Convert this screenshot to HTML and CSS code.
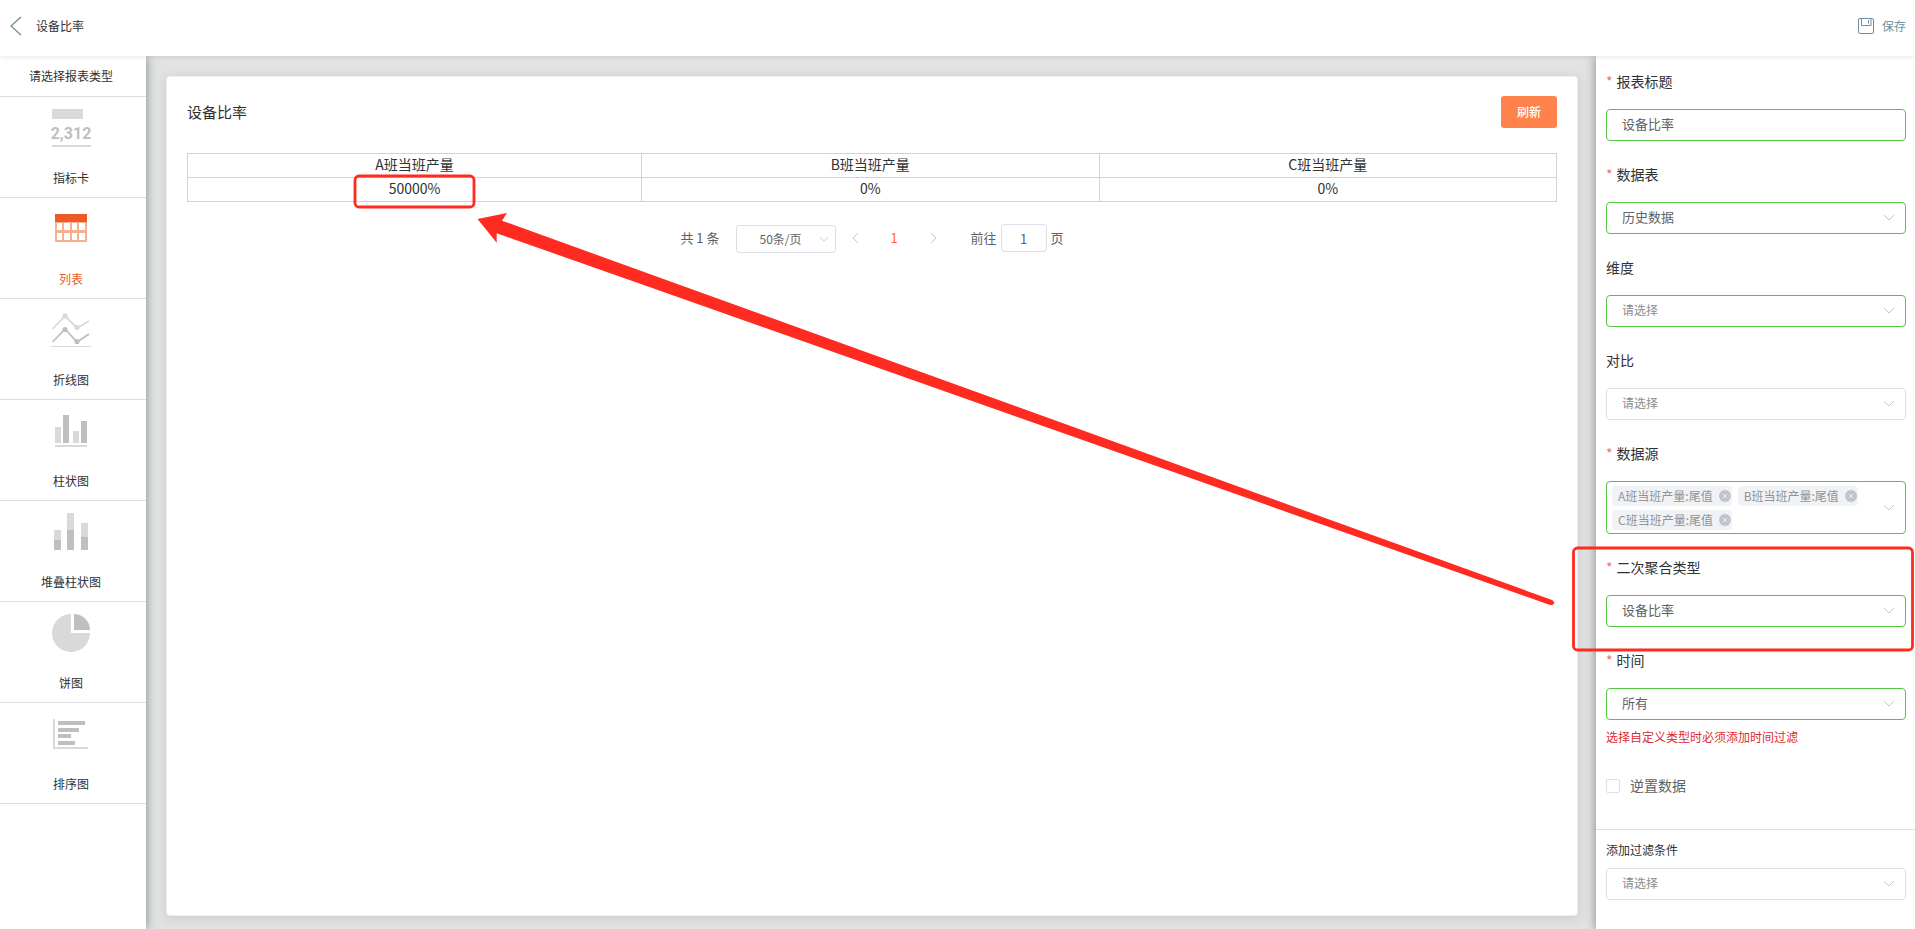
FILE: index.html
```html
<!DOCTYPE html>
<html lang="zh-CN">
<head>
<meta charset="utf-8">
<title>设备比率</title>
<link rel="stylesheet" href="styles.css">
</head>
<body>
<svg class="defs" aria-hidden="true">
  <symbol id="chev" viewBox="0 0 12 8"><path d="M1 1l5 5 5-5" fill="none" stroke="currentColor"/></symbol>
  <symbol id="close" viewBox="0 0 12 12"><circle cx="6" cy="6" r="6" fill="#c0c4cc"/><path d="M4 4l4 4M8 4l-4 4" stroke="#fff" stroke-width=".8" fill="none"/></symbol>
</svg>
<header class="topbar">
  <button class="back" type="button" aria-label="返回"><svg width="12" height="20" viewBox="0 0 12 20"><path d="M11 1L1 10l10 9" fill="none" stroke="#7b95a2" stroke-width="1.5"/></svg></button>
  <h1 class="page-title">设备比率</h1>
  <button class="save" type="button">
    <svg width="16" height="16" viewBox="0 0 16 16" fill="none" stroke="#6e8f9e"><rect x=".5" y=".5" width="15" height="15" rx="1.5"/><path d="M3.500.500v7h9.500v-7M10.500 2v3.500"/></svg>
    <span>保存</span>
  </button>
</header>
<div class="workspace">
  <nav class="types">
    <h2 class="types-title">请选择报表类型</h2>
    <button class="type" type="button">
      <svg width="42" height="42" viewBox="0 0 42 42"><path fill="#d9d9d9" d="M2 2h31v10H2zM2 38h39v2H2z"/><text x="21" y="32" text-anchor="middle" class="metric">2,312</text></svg>
      <span>指标卡</span>
    </button>
    <button class="type active" type="button">
      <svg width="42" height="42" viewBox="0 0 42 42"><path fill="#f6b08f" fill-rule="evenodd" d="M5 14h32v20H5zM7 15h5v7H7zM14 15h6v7h-6zM22 15h5v7h-5zM29 15h6v7h-6zM7 25h5v7H7zM14 25h6v7h-6zM22 25h5v7h-5zM29 25h6v7h-6z"/><path fill="#ed5a26" d="M5 6h32v8H5z"/></svg>
      <span>列表</span>
    </button>
    <button class="type" type="button">
      <svg width="42" height="42" viewBox="0 0 42 42" fill="none" stroke-width="1.8"><path d="M2.500 20L15 7l12 12 12-7" stroke="#d9d9d9"/><path d="M2.500 33L15 20l12 13 12-8" stroke="#bfbfbf"/><path d="M1 37.500h40" stroke="#d9d9d9" stroke-width="1"/><g stroke="none"><circle cx="15" cy="7" r="2.600" fill="#d9d9d9"/><circle cx="27" cy="18.500" r="2.600" fill="#d9d9d9"/><circle cx="15" cy="20.500" r="2.600" fill="#bfbfbf"/><circle cx="27" cy="32.500" r="2.600" fill="#bfbfbf"/></g></svg>
      <span>折线图</span>
    </button>
    <button class="type" type="button">
      <svg width="42" height="42" viewBox="0 0 42 42"><path fill="#d9d9d9" d="M5 17h6v16H5zM23 21h6v12h-6zM5 35h32v2H5z"/><path fill="#bfbfbf" d="M13 5h6v28h-6zM31 11h6v22h-6z"/></svg>
      <span>柱状图</span>
    </button>
    <button class="type" type="button">
      <svg width="42" height="42" viewBox="0 0 42 42"><path fill="#d9d9d9" d="M4 19h7v10H4zM17 2h7v17h-7zM31 12h7v14h-7z"/><path fill="#bfbfbf" d="M4 29h7v10H4zM17 19h7v20h-7zM31 26h7v13h-7z"/></svg>
      <span>堆叠柱状图</span>
    </button>
    <button class="type" type="button">
      <svg width="42" height="42" viewBox="0 0 42 42"><path fill="#d9d9d9" d="M21 2v19h19a19 19 0 1 1-19-19z"/><path fill="#bfbfbf" d="M24 2a16 16 0 0 1 16 16H24z"/></svg>
      <span>饼图</span>
    </button>
    <button class="type" type="button">
      <svg width="42" height="42" viewBox="0 0 42 42"><path fill="#d9d9d9" d="M3 6h2v28h33v2H3z"/><path fill="#bfbfbf" d="M8 8h27v4H8zM8 15h21v4H8zM8 21h13v4H8zM8 28h17v4H8z"/></svg>
      <span>排序图</span>
    </button>
  </nav>
  <main class="stage">
    <section class="card">
      <div class="card-head">
        <h2 class="card-title">设备比率</h2>
        <button class="refresh" type="button">刷新</button>
      </div>
      <table class="grid">
        <colgroup><col class="first"><col><col></colgroup>
        <thead><tr><th>A班当班产量</th><th>B班当班产量</th><th>C班当班产量</th></tr></thead>
        <tbody><tr><td>50000%</td><td>0%</td><td>0%</td></tr></tbody>
      </table>
      <div class="pager">
        <span class="total">共 1 条</span>
        <span class="field size-field"><select class="size" aria-label="每页条数"><option>50条/页</option></select><svg class="chev" width="10" height="7"><use href="#chev"/></svg></span>
        <button class="step" type="button" aria-label="上一页"><svg width="7" height="10" viewBox="0 0 7 10"><path d="M6 0L1 5l5 5" fill="none" stroke="currentColor"/></svg></button>
        <button class="step current" type="button">1</button>
        <button class="step" type="button" aria-label="下一页"><svg width="7" height="10" viewBox="0 0 7 10"><path d="M1 0l5 5-5 5" fill="none" stroke="currentColor"/></svg></button>
        <label class="jump">前往 <input type="text" value="1"> 页</label>
      </div>
    </section>
  </main>
  <aside class="settings">
    <form class="form">
      <div class="row"><label class="required" for="title">报表标题</label><input class="control ok" id="title" type="text" value="设备比率"></div>
      <div class="row"><label class="required" for="src">数据表</label><span class="field"><select class="control ok" id="src"><option>历史数据</option></select><svg class="chev" width="12" height="8"><use href="#chev"/></svg></span></div>
      <div class="row"><label for="dim">维度</label><span class="field"><select class="control ok empty" id="dim"><option>请选择</option></select><svg class="chev" width="12" height="8"><use href="#chev"/></svg></span></div>
      <div class="row"><label for="cmp">对比</label><span class="field"><select class="control empty" id="cmp"><option>请选择</option></select><svg class="chev" width="12" height="8"><use href="#chev"/></svg></span></div>
      <div class="row"><span class="required label" id="ds">数据源</span>
        <div class="field" role="group" aria-labelledby="ds">
          <div class="tags">
            <span class="tag">A班当班产量:尾值<button type="button" aria-label="移除"><svg width="12" height="12"><use href="#close"/></svg></button></span>
            <span class="tag">B班当班产量:尾值<button type="button" aria-label="移除"><svg width="12" height="12"><use href="#close"/></svg></button></span>
            <span class="tag">C班当班产量:尾值<button type="button" aria-label="移除"><svg width="12" height="12"><use href="#close"/></svg></button></span>
          </div>
          <svg class="chev" width="12" height="8"><use href="#chev"/></svg>
        </div>
      </div>
      <div class="row"><label class="required" for="agg">二次聚合类型</label><span class="field"><select class="control ok" id="agg"><option>设备比率</option></select><svg class="chev" width="12" height="8"><use href="#chev"/></svg></span></div>
      <div class="row last"><label class="required" for="time">时间</label><span class="field"><select class="control ok" id="time"><option>所有</option></select><svg class="chev" width="12" height="8"><use href="#chev"/></svg></span></div>
      <p class="hint">选择自定义类型时必须添加时间过滤</p>
      <label class="check"><input type="checkbox">逆置数据</label>
    </form>
    <div class="filters">
      <label for="filter">添加过滤条件</label>
      <span class="field"><select class="control empty" id="filter"><option>请选择</option></select><svg class="chev" width="12" height="8"><use href="#chev"/></svg></span>
    </div>
  </aside>
</div>
<svg class="markup" width="1915" height="929" viewBox="0 0 1915 929" aria-hidden="true">
  <g fill="none" stroke="#ff2a20" stroke-width="2.800"><rect x="355" y="176" width="119" height="31" rx="4"/><rect x="1573.500" y="548" width="339" height="102" rx="4"/></g>
  <path fill="#ff2a20" d="M477.500 219L507 213l-5 7.700 158 57L1552 600q3 1.500 2 3.500t-4 1.500L660 290.700 496.700 233.300v9.400z"/>
</svg>
</body>
</html>
```
FILE: styles.css
```css
* { box-sizing: border-box; }
body {
  margin: 0;
  min-height: 100vh;
  display: flex;
  flex-direction: column;
  overflow: hidden;
  background: #fff;
  color: #303133;
  font: 12px/18px "Noto Sans CJK SC", sans-serif;
}
button, input, select { font: inherit; color: inherit; margin: 0; }
button { border: 0; padding: 0; background: none; cursor: pointer; }
h1, h2, p { margin: 0; font-weight: 400; }
.defs { display: none; }

.topbar {
  position: relative;
  z-index: 2;
  display: flex;
  align-items: center;
  height: 56px;
  padding: 0 9px 4px 10px;
  background: #fff;
  box-shadow: 0 1px 4px rgba(0, 0, 0, .1);
}
.back, .save svg, .type svg { display: block; }
.back { display: flex; }
.page-title { margin-left: 14px; font-size: 12px; }
.save { display: flex; align-items: center; gap: 8px; margin-left: auto; color: #6e8f9e; }

.workspace { flex: 1; display: flex; background: #e2e2e2; }
.types, .settings { position: relative; z-index: 1; flex: none; background: #fff; box-shadow: 0 0 10px #7b8790; }
.types { width: 146px; }
.types-title {
  height: 41px;
  padding: 0 4px 0 0;
  border-bottom: 1px solid #dcdfe0;
  font-size: 12px;
  line-height: 40px;
  text-align: center;
}
.type {
  display: flex;
  flex-direction: column;
  align-items: center;
  gap: 20px;
  width: 100%;
  height: 101px;
  padding: 10px 4px 0 0;
  border-bottom: 1px solid #dcdfe0;
}
.active { color: #ed5a26; }
.metric { font: bold 16px Roboto, sans-serif; fill: #bfbfbf; }

.stage { flex: 1; display: flex; padding: 20px 18px 13px 20px; }
.card {
  flex: 1;
  padding: 19px 20px;
  border: 1px solid #ebeef5;
  border-radius: 4px;
  background: #fff;
  box-shadow: 0 2px 12px rgba(0, 0, 0, .1);
}
.card-head { display: flex; align-items: center; justify-content: space-between; }
.card-title { font-size: 15px; }
.refresh {
  width: 56px;
  height: 32px;
  border-radius: 3px;
  background: #ff824c;
  color: #fff;
  font-weight: 500;
}
.grid {
  width: 100%;
  margin-top: 25px;
  border-collapse: collapse;
  table-layout: fixed;
  font-size: 14px;
  line-height: 21px;
  text-align: center;
}
.first { width: 454px; }
.grid th, .grid td { padding: 0 0 2px; border: 1px solid #d3d3d3; font-weight: 400; }

.pager { display: flex; justify-content: center; align-items: center; margin-top: 21px; font-size: 13px; color: #606266; }
.size-field { width: 100px; margin: 2px 0 0 16px; }
.size {
  appearance: none;
  height: 28px;
  padding: 0 24px 0 23px;
  border: 1px solid #dcdfe6;
  border-radius: 3px;
  background: #fff;
  font-size: 12px;
}
.size-field .chev { margin-right: 7px; }
.step { display: flex; align-items: center; justify-content: center; width: 39px; height: 28px; color: #c0c4cc; }
.current { color: #ff6633; }
.jump { display: flex; align-items: center; gap: 4px; margin-left: 18px; }
.jump input { width: 46px; height: 28px; border: 1px solid #dcdfe6; border-radius: 4px; text-align: center; }

.field { display: grid; align-items: center; }
.field > * { grid-area: 1 / 1; }
.chev { justify-self: end; margin-right: 11px; color: #c0c4cc; pointer-events: none; }

.settings { width: 319px; }
.form { padding: 15px 9px 0 10px; }
.row { display: flex; flex-direction: column; gap: 17px; margin-bottom: 23px; }
.row.last { margin-bottom: 8px; }
.row > label, .label { font-size: 14px; line-height: 21px; }
.required::before { content: "*"; margin-right: 4px; color: #f56c6c; }
.control {
  appearance: none;
  width: 100%;
  height: 32px;
  padding: 0 15px 2px;
  border: 1px solid #dcdfe6;
  border-radius: 4px;
  background: #fff;
  color: #606266;
  font-size: 13px;
}
input.control { padding-bottom: 4px; }
.control.ok { border-color: #55c443; }
.empty { color: #8c8c8c; font-size: 12px; }
.tags {
  display: flex;
  flex-wrap: wrap;
  gap: 4px 6px;
  min-height: 53px;
  padding: 4px 30px 3px 5px;
  border: 1px solid #55c443;
  border-radius: 4px;
}
.tag {
  display: flex;
  align-items: center;
  gap: 6px;
  height: 20px;
  padding: 0 1px 0 6px;
  border-radius: 4px;
  background: #f0f2f5;
  color: #909399;
}
.tag button { display: flex; }
.hint { color: #e02b33; }
.check { display: flex; align-items: center; gap: 10px; margin-top: 29px; font-size: 14px; line-height: 21px; color: #606266; }
.check input { appearance: none; width: 14px; height: 14px; border: 1px solid #dcdfe6; border-radius: 2px; background: #fff; }
.filters { display: grid; gap: 9px; margin-top: 33px; padding: 11px 9px 0 10px; border-top: 1px solid #dcdfe6; }

.markup { position: absolute; top: 0; left: 0; z-index: 5; pointer-events: none; }
```
